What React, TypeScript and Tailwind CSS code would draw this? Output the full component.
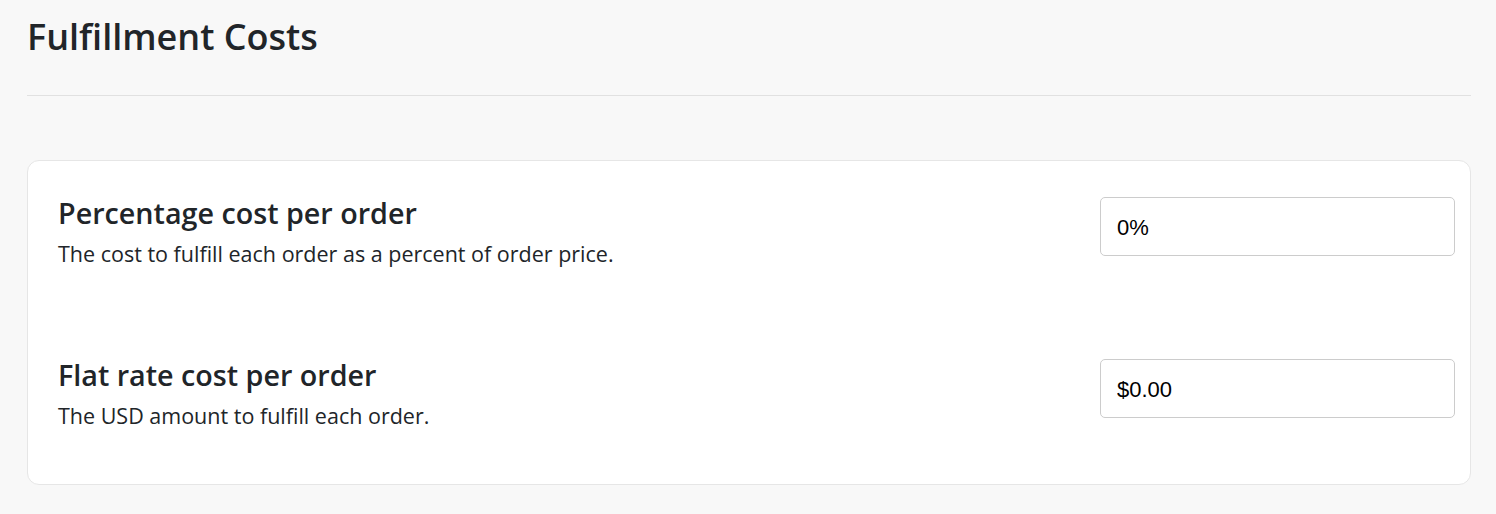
import React from 'react';

const rows = [
  {
    title: 'Percentage cost per order',
    description: 'The cost to fulfill each order as a percent of order price.',
    value: '0%',
  },
  {
    title: 'Flat rate cost per order',
    description: 'The USD amount to fulfill each order.',
    value: '$0.00',
  },
];

const App: React.FC = () => {
  return (
    <div className="min-h-[514px] bg-[#f8f8f8] pl-[27px] pr-[25px] pt-[13px] font-['Open_Sans',sans-serif] text-[#212529]">
      <h1 className="text-[36px] font-semibold leading-[48px]">Fulfillment Costs</h1>
      <div className="mt-[34px] border-t border-[#e1e1e1]" />

      <div className="mt-[64px] rounded-xl border border-[#e6e6e6] bg-white pt-[36px] pr-[15px] pb-[54px] pl-[30px]">
        {rows.map((row, i) => (
          <div key={row.title} className={`flex items-start justify-between ${i > 0 ? 'mt-[91px]' : ''}`}>
            <div>
              <h2 className="text-[28.7px] font-semibold leading-[32px]">{row.title}</h2>
              <p className="mt-[11px] text-[21.5px] leading-[28px]">{row.description}</p>
            </div>
            <input
              readOnly
              value={row.value}
              className="h-[59px] w-[355px] rounded-[5px] border border-[#cccccc] bg-white px-[16px] pt-[2px] font-['Liberation_Sans',sans-serif] text-[22px] text-black outline-none"
            />
          </div>
        ))}
      </div>
    </div>
  );
};

export default App;
